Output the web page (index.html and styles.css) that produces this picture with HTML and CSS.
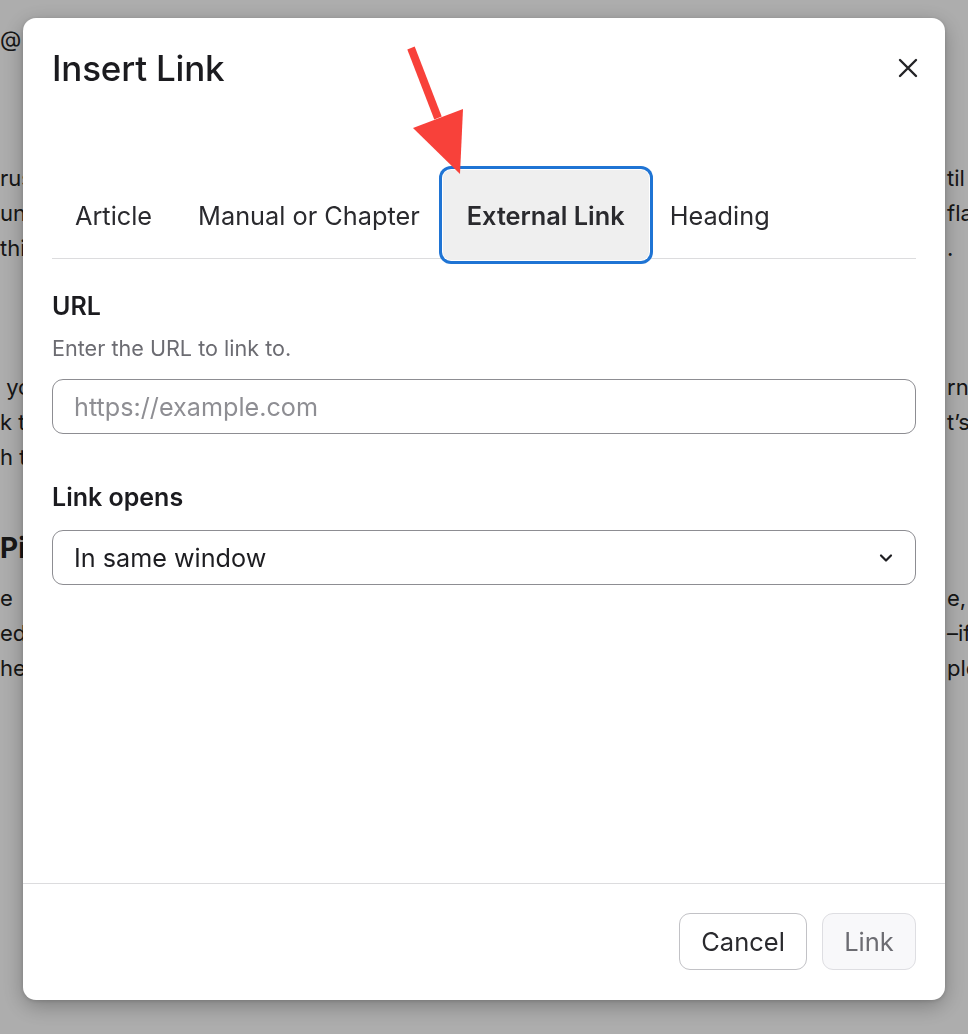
FILE: index.html
```html
<!DOCTYPE html>
<html lang="en">
<head>
<meta charset="utf-8">
<title>Insert Link</title>
<link rel="stylesheet" href="styles.css">
</head>
<body>
<div class="page" aria-hidden="true">
  <div class="bg-line first"><span class="l">@</span><span class="r"></span></div>
  <div class="bg-para p1">
    <div class="bg-line"><span class="l">rus</span><span class="r">til</span></div>
    <div class="bg-line"><span class="l">un</span><span class="r">fla</span></div>
    <div class="bg-line"><span class="l">thi</span><span class="r">.</span></div>
  </div>
  <div class="bg-para p2">
    <div class="bg-line"><span class="l">&nbsp;yo</span><span class="r">rn</span></div>
    <div class="bg-line"><span class="l">k t</span><span class="r">t’s</span></div>
    <div class="bg-line"><span class="l">h t</span><span class="r"></span></div>
  </div>
  <div class="bg-heading">Pie</div>
  <div class="bg-para p3">
    <div class="bg-line"><span class="l">e</span><span class="r">e,</span></div>
    <div class="bg-line"><span class="l">ed</span><span class="r">–if</span></div>
    <div class="bg-line"><span class="l">he</span><span class="r">ple</span></div>
  </div>
</div>

<div class="overlay">
  <div class="modal" role="dialog" aria-labelledby="dlg-title">
    <div class="modal-head">
      <div class="title-row">
        <h1 id="dlg-title" class="title">Insert Link</h1>
        <button class="close" aria-label="Close">
          <svg width="20" height="20" viewBox="0 0 20 20"><path d="M2 2 L18 18 M18 2 L2 18" stroke="#232326" stroke-width="2.4" stroke-linecap="round" fill="none"/></svg>
        </button>
      </div>
      <div class="tabs">
        <div class="tab">Article</div>
        <div class="tab">Manual or Chapter</div>
        <div class="tab active">External Link</div>
        <div class="tab">Heading</div>
      </div>
    </div>

    <div class="modal-body">
      <div class="field">
        <label class="label">URL</label>
        <div class="help">Enter the URL to link to.</div>
        <div class="input"><span class="placeholder">https://example.com</span></div>
      </div>
      <div class="field field-2">
        <label class="label">Link opens</label>
        <div class="input select">
          <span class="value">In same window</span>
          <svg class="chev" width="14" height="10" viewBox="0 0 14 10"><path d="M2 2.5 L7 7.5 L12 2.5" stroke="#1e1e22" stroke-width="2.2" fill="none" stroke-linecap="round" stroke-linejoin="round"/></svg>
        </div>
      </div>
    </div>

    <div class="modal-foot">
      <button class="btn btn-cancel">Cancel</button>
      <button class="btn btn-link">Link</button>
    </div>
  </div>

  <svg class="arrow" width="70" height="140" viewBox="0 0 70 140">
    <polygon points="7.3,9.4 14.7,6.6 41.7,76.6 34.3,79.4" fill="#f8413a"/>
    <polygon points="13,88 63,69 60,134" fill="#f8413a"/>
  </svg>
</div>
</body>
</html>
```

FILE: styles.css
```css
* { box-sizing: border-box; }

html, body {
  margin: 0;
  padding: 0;
  width: 968px;
  height: 1034px;
  overflow: hidden;
}

body {
  font-family: Inter, "Noto Sans", "Liberation Sans", sans-serif;
  background: #ffffff;
  color: #222;
}

/* background article */
.page {
  font-size: 22px;
  line-height: 35px;
  color: #222;
}
.bg-line {
  display: flex;
  white-space: nowrap;
}
.bg-line .l {
  width: 947px;
  overflow: hidden;
  flex: none;
}
.bg-line .r { flex: none; }
.bg-line.first { margin-top: 22px; }
.p1 { margin-top: 104px; }
.p2 { margin-top: 104px; }
.bg-heading {
  margin-top: 56px;
  font-size: 28px;
  font-weight: 700;
  line-height: 35px;
}
.p3 { margin-top: 15px; }

/* overlay + modal */
.overlay {
  position: fixed;
  inset: 0;
  background: rgba(0, 0, 0, 0.32);
  display: flex;
  align-items: flex-start;
  justify-content: flex-start;
  padding: 18px 23px 34px 23px;
}

.modal {
  width: 922px;
  height: 982px;
  background: #fff;
  border-radius: 13px;
  box-shadow: 0 6px 22px rgba(0, 0, 0, 0.28), 0 1px 4px rgba(0,0,0,0.15);
  display: flex;
  flex-direction: column;
  color: #1d1d21;
}

.modal-head {
  padding: 29px 29px 0 29px;
}

.title-row {
  display: flex;
  align-items: center;
  justify-content: space-between;
  height: 42px;
}

.title {
  margin: 0;
  font-size: 35px;
  font-weight: 500;
  line-height: 42px;
  letter-spacing: -0.2px;
  color: #1b1b1f;
}

.close {
  border: 0;
  background: transparent;
  padding: 0;
  width: 20px;
  height: 20px;
  margin-right: -2px;
  display: flex;
}

.tabs {
  margin-top: 81px;
  display: flex;
  border-bottom: 1px solid #dcdcde;
  height: 89px;
}

.tab {
  display: flex;
  align-items: center;
  padding: 0 23px;
  font-size: 25.3px;
  color: #2a2a2e;
  height: 90px;
}

.tab.active {
  position: relative;
  z-index: 1;
  background: #efefef;
  border-radius: 8px;
  font-weight: 600;
  padding: 0 24px;
  box-shadow: 0 0 0 1px #fff, 0 0 0 4px #1f74d4;
  color: #2a2a2e;
}

.tab.active + .tab { padding-left: 21px; }

.modal-body {
  flex: 1;
  padding: 33px 29px 0 29px;
}

.field { display: flex; flex-direction: column; }
.field-2 { margin-top: 49px; }

.label {
  font-size: 25px;
  font-weight: 600;
  line-height: 28px;
  color: #1b1b1f;
}

.help {
  margin-top: 14px;
  font-size: 21.6px;
  line-height: 28px;
  color: #6c6c72;
}

.input {
  margin-top: 17px;
  height: 55px;
  border: 1.5px solid #8d8d92;
  border-radius: 11px;
  display: flex;
  align-items: center;
  padding: 0 21px;
  font-size: 25.2px;
}

.field-2 .input { margin-top: 19px; }

.placeholder { color: #8e8e93; }

.select {
  justify-content: space-between;
  padding-right: 22px;
}
.select .value { color: #1d1d21; }
.chev { flex: none; }

.modal-foot {
  border-top: 1px solid #dcdcde;
  padding: 29px 29px 30px 29px;
  display: flex;
  justify-content: flex-end;
  gap: 15px;
}

.btn {
  font-family: inherit;
  height: 57px;
  border-radius: 11px;
  font-size: 25.5px;
  padding: 0;
}

.btn-cancel {
  width: 128px;
  background: #fff;
  border: 1px solid #c2c2c6;
  color: #2a2a2e;
}

.btn-link {
  width: 94px;
  background: #f8f8fa;
  border: 1px solid #dedee2;
  color: #6c6c72;
}

.arrow {
  position: absolute;
  left: 400px;
  top: 40px;
  z-index: 5;
}
```
